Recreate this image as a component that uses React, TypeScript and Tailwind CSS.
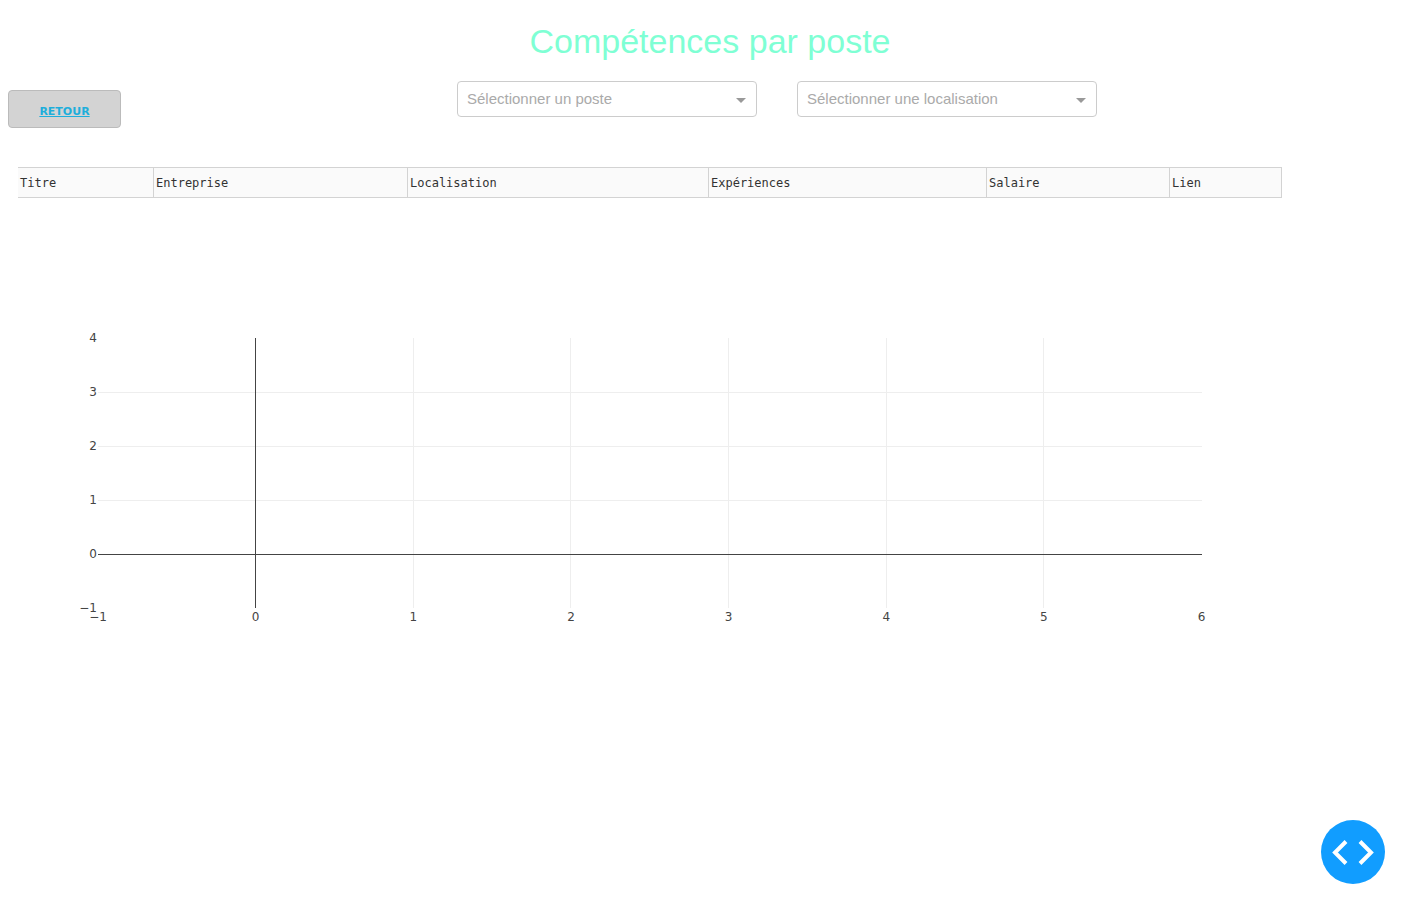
import React from "react";

const columns = [
  { name: "Titre", width: "w-[135px]" },
  { name: "Entreprise", width: "w-[254px]" },
  { name: "Localisation", width: "w-[301px]" },
  { name: "Expériences", width: "w-[278px]" },
  { name: "Salaire", width: "w-[183px]" },
  { name: "Lien", width: "w-[112px]" },
];

function Dropdown({ id, label }: { id: string; label: string }) {
  return (
    <div className="relative w-[300px]">
      <select
        id={id}
        aria-label={label}
        defaultValue=""
        className="block h-9 w-full appearance-none rounded border border-[#cccccc] bg-white pt-px pr-8 pl-[9px] text-[15px] text-[#aaaaaa]"
      >
        <option value="">{label}</option>
      </select>
      <span className="pointer-events-none absolute top-[17px] right-[11px] border-x-5 border-t-5 border-x-transparent border-t-[#999999]" />
    </div>
  );
}

const xTicks = [-1, 0, 1, 2, 3, 4, 5, 6];
const yTicks = [4, 3, 2, 1, 0, -1];
const format = (n: number) => String(n).replace("-", "−");

function Chart() {
  return (
    <div className="h-[450px] px-20 pt-[100px] pb-20">
      <svg
        className="block h-[270px] w-full overflow-visible font-['DejaVu_Sans',sans-serif] text-[12px]"
        role="img"
        aria-label="Graphique"
        shapeRendering="crispEdges"
      >
        {xTicks.slice(2, 7).map((n) => (
          <line key={n} x1={`${((n + 1) / 7) * 100}%`} x2={`${((n + 1) / 7) * 100}%`} y1="0" y2="270" stroke="#eeeeee" />
        ))}
        {[1, 2, 3].map((n) => (
          <line key={n} x1="0" x2="100%" y1={(4 - n) * 54 + 0.5} y2={(4 - n) * 54 + 0.5} stroke="#eeeeee" />
        ))}
        <line x1="0" x2="100%" y1="216.5" y2="216.5" stroke="#444444" />
        <line x1={`${100 / 7}%`} x2={`${100 / 7}%`} y1="0" y2="270" stroke="#444444" />
        {xTicks.map((n) => (
          <text key={n} x={`${((n + 1) / 7) * 100}%`} y="283" textAnchor="middle" fill="#444444">
            {format(n)}
          </text>
        ))}
        {yTicks.map((n) => (
          <text key={n} x="-1" y={(4 - n) * 54 + 4} textAnchor="end" fill="#444444">
            {format(n)}
          </text>
        ))}
      </svg>
    </div>
  );
}

export default function App() {
  return (
    <main className="min-h-screen bg-white px-2 pt-4 font-['Liberation_Sans',Arial,sans-serif]">
      <h1 className="text-center text-[34px] leading-[50px] text-[#7fffd4]">Compétences par poste</h1>

      <div className="mt-[15px] flex items-start">
        <a
          href="#retour"
          className="mt-[9px] flex h-[38px] w-[113px] items-center justify-center rounded border border-[#bbbbbb] bg-[#d3d3d3] pt-1.5 font-['DejaVu_Sans',sans-serif] text-[11px] font-bold text-[#1eaedb] underline"
        >
          RETOUR
        </a>
        <div className="flex flex-1 justify-center gap-10 pl-[21px]">
          <Dropdown id="poste" label="Sélectionner un poste" />
          <Dropdown id="localisation" label="Sélectionner une localisation" />
        </div>
      </div>

      <div className="mt-[39px] ml-[10px] w-[90%]">
        <table className="w-[calc(100%-1px)] table-fixed border-separate border-spacing-0 border-y border-r border-[#d3d3d3] bg-[#fafafa]">
          <thead>
            <tr>
              {columns.map(({ name, width }) => (
                <th
                  key={name}
                  scope="col"
                  className={`${width} h-[29px] border-l border-[#d3d3d3] px-0.5 text-left font-['DejaVu_Sans_Mono',monospace] text-[12px] font-normal text-[#323232] first:border-l-0`}
                >
                  {name}
                </th>
              ))}
            </tr>
          </thead>
        </table>

        <div className="mt-10">
          <Chart />
        </div>
      </div>

      <button
        type="button"
        aria-label="Menu développeur"
        className="fixed right-[35px] bottom-[35px] flex size-16 items-center justify-center rounded-full bg-[#119dff]"
      >
        <svg className="size-16" viewBox="0 0 64 64" fill="none" stroke="#ffffff" strokeWidth="4">
          <path d="M25 21.5 14 32.5 25 43.5M39 21.5 50 32.5 39 43.5" />
        </svg>
      </button>
    </main>
  );
}
